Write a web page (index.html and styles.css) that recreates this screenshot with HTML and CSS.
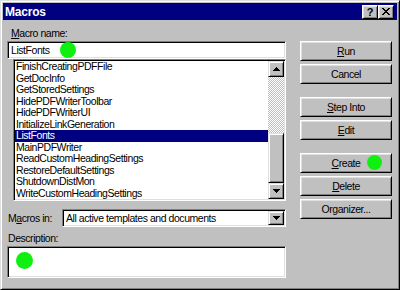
FILE: index.html
```html
<!DOCTYPE html>
<html>
<head>
<meta charset="utf-8">
<title>Macros</title>
<link rel="stylesheet" href="styles.css">
</head>
<body>
<div class="window">
  <div class="titlebar">
    <span class="title">Macros</span>
    <div class="tbtns">
      <span class="tbtn help">?</span>
      <span class="tbtn close"><svg width="8" height="7" viewBox="0 0 8 7"><path d="M0 0h2v1H0zM6 0h2v1H6zM1 1h2v1H1zM5 1h2v1H5zM2 2h4v1H2zM3 3h2v1H3zM2 4h4v1H2zM1 5h2v1H1zM5 5h2v1H5zM0 6h2v1H0zM6 6h2v1H6z" fill="#000"/></svg></span>
    </div>
  </div>
  <div class="client">
    <div class="left">
      <div class="label first"><u>M</u>acro name:</div>
      <div class="field name">ListFonts<span class="dot dot-name"></span></div>
      <div class="listbox">
        <ul class="items">
          <li>FinishCreatingPDFFile</li>
          <li>GetDocInfo</li>
          <li>GetStoredSettings</li>
          <li>HidePDFWriterToolbar</li>
          <li>HidePDFWriterUI</li>
          <li>InitializeLinkGeneration</li>
          <li class="sel">ListFonts</li>
          <li>MainPDFWriter</li>
          <li>ReadCustomHeadingSettings</li>
          <li>RestoreDefaultSettings</li>
          <li>ShutdownDistMon</li>
          <li>WriteCustomHeadingSettings</li>
        </ul>
        <div class="vscroll">
          <div class="sbtn"><svg width="7" height="4" viewBox="0 0 7 4"><path d="M3 0h1v1h1v1h1v1h1v1H0V3h1V2h1V1h1z" fill="#000"/></svg></div>
          <div class="track"></div>
          <div class="thumb"></div>
          <div class="sbtn"><svg width="7" height="4" viewBox="0 0 7 4"><path d="M0 0h7v1H6v1H5v1H4v1H3V3H2V2H1V1H0z" fill="#000"/></svg></div>
        </div>
      </div>
      <div class="row">
        <span class="label inl">M<u>a</u>cros in:</span>
        <div class="field combo">
          <span class="ctext">All active templates and documents</span>
          <span class="sbtn"><svg width="7" height="4" viewBox="0 0 7 4"><path d="M0 0h7v1H6v1H5v1H4v1H3V3H2V2H1V1H0z" fill="#000"/></svg></span>
        </div>
      </div>
      <div class="label second">Description:</div>
      <div class="field desc"><span class="dot dot-desc"></span></div>
    </div>
    <div class="right">
      <div class="btn"><u>R</u>un</div>
      <div class="btn">Cancel</div>
      <div class="btn group"><u>S</u>tep Into</div>
      <div class="btn"><u>E</u>dit</div>
      <div class="btn group"><u>C</u>reate<span class="dot dot-create"></span></div>
      <div class="btn"><u>D</u>elete</div>
      <div class="btn">Organizer...</div>
    </div>
  </div>
</div>
</body>
</html>
```

FILE: styles.css
```css
* { box-sizing: border-box; }
html, body { margin: 0; padding: 0; }
body {
  width: 400px;
  height: 290px;
  overflow: hidden;
  background: #c0c0c0;
  font-family: "Liberation Sans", Arial, sans-serif;
  font-size: 10.5px;
  letter-spacing: -0.45px;
  color: #000;
}
u { text-decoration: underline; text-underline-offset: 1px; }

.window {
  width: 400px;
  height: 290px;
  background: #c0c0c0;
  border: 1px solid;
  border-color: #dfdfdf #000 #000 #dfdfdf;
  box-shadow: inset 1px 1px #fff, inset -1px -1px #808080;
  padding: 2px;
  display: flex;
  flex-direction: column;
}

.titlebar {
  height: 17px;
  background: #000080;
  display: flex;
  align-items: center;
  justify-content: space-between;
  padding: 0 3px 0 2px;
}
.title {
  color: #fff;
  font-weight: bold;
  font-size: 12px;
  letter-spacing: -0.2px;
}
.tbtns { display: flex; }
.tbtn {
  width: 16px;
  height: 14px;
  background: #c0c0c0;
  border: 1px solid;
  border-color: #fff #000 #000 #fff;
  box-shadow: inset 1px 1px #dfdfdf, inset -1px -1px #808080;
  display: flex;
  align-items: center;
  justify-content: center;
}
.tbtn.help {
  font-weight: bold;
  font-size: 11px;
  line-height: 12px;
  letter-spacing: 0;
}
.tbtn svg { display: block; }

.client {
  flex: 1;
  display: flex;
  gap: 14px;
  padding: 7px 5px 0 4px;
}
.left {
  width: 279px;
  display: flex;
  flex-direction: column;
}
.right {
  width: 92px;
  display: flex;
  flex-direction: column;
  padding-top: 14px;
}

.label {
  height: 13px;
  line-height: 13px;
  padding-left: 1px;
  white-space: nowrap;
}
.label.first { padding-left: 4px; }
.label.second { margin-top: 5px; }

.field {
  position: relative;
  background: #fff;
  border: 1px solid;
  border-color: #808080 #fff #fff #808080;
  box-shadow: inset 1px 1px #000, inset -1px -1px #dfdfdf;
}
.field.name {
  margin-top: 1px;
  height: 18px;
  line-height: 16px;
  padding-left: 3px;
}

.listbox {
  margin-left: 6px;
  height: 142px;
  display: flex;
  background: #fff;
  border: 1px solid;
  border-color: #808080 #fff #fff #808080;
  box-shadow: inset 1px 1px #000, inset -1px -1px #dfdfdf;
  padding: 1px;
}
.items {
  flex: 1;
  list-style: none;
  margin: 0;
  padding: 0;
}
.items li {
  height: 11.5px;
  line-height: 11.5px;
  padding-left: 1px;
  white-space: nowrap;
}
.items li.sel {
  background: #000080;
  color: #fff;
}

.vscroll {
  width: 16px;
  display: flex;
  flex-direction: column;
}
.sbtn {
  width: 16px;
  height: 16px;
  flex: none;
  background: #c0c0c0;
  border: 1px solid;
  border-color: #dfdfdf #000 #000 #dfdfdf;
  box-shadow: inset 1px 1px #fff, inset -1px -1px #808080;
  display: flex;
  align-items: center;
  justify-content: center;
}
.sbtn svg { display: block; }
.track {
  height: 56px;
  background: repeating-conic-gradient(#fff 0 25%, #c0c0c0 0 50%) 0 0 / 2px 2px;
}
.thumb {
  height: 50px;
  background: #c0c0c0;
  border: 1px solid;
  border-color: #dfdfdf #000 #000 #dfdfdf;
  box-shadow: inset 1px 1px #fff, inset -1px -1px #808080;
}

.row {
  margin-top: 8px;
  height: 18px;
  display: flex;
  align-items: center;
}
.label.inl { width: 55px; }
.field.combo {
  flex: 1;
  height: 18px;
  padding: 1px;
  display: flex;
  align-items: center;
}
.ctext {
  flex: 1;
  line-height: 14px;
  padding-left: 2px;
  white-space: nowrap;
}
.combo .sbtn { height: 14px; }

.field.desc {
  margin-top: 1px;
  height: 32px;
}

.btn {
  position: relative;
  height: 20px;
  margin-top: 3px;
  background: #c0c0c0;
  border: 1px solid;
  border-color: #fff #000 #000 #fff;
  box-shadow: inset 1px 1px #dfdfdf, inset -1px -1px #808080;
  display: flex;
  align-items: center;
  justify-content: center;
  white-space: nowrap;
  line-height: 13px;
}
.btn:first-child { margin-top: 0; }
.btn.group { margin-top: 13px; }

.dot {
  position: absolute;
  border-radius: 50%;
  background: #10f010;
}
.dot-name { left: 52px; top: 0; width: 16px; height: 16px; }
.dot-create { left: 66px; top: 1px; width: 15px; height: 15px; }
.dot-desc { left: 8px; top: 5px; width: 17px; height: 17px; }
```
